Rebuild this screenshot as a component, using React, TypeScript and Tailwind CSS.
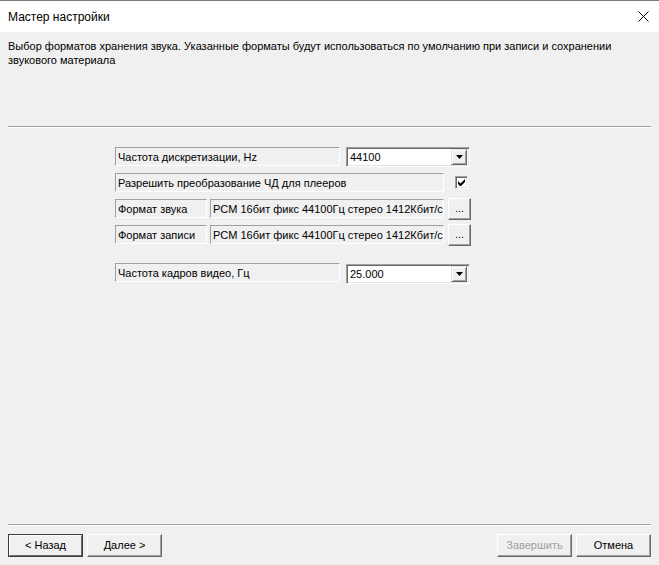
import React from "react";

const font = { fontFamily: '"Liberation Sans", Arial, sans-serif' };

function StaticBox({ w, children }: { w: string; children?: React.ReactNode }) {
  return (
    <div
      className={`${w} h-[19px] border border-t-[#a0a0a0] border-l-[#a0a0a0] border-b-white border-r-white flex items-center pl-[2px] pt-[1px] text-[11px] text-black whitespace-nowrap overflow-hidden`}
    >
      {children}
    </div>
  );
}

function Arrow() {
  return (
    <div className="w-[16px] h-[16px] bg-[#f0f0f0] border border-t-[#e3e3e3] border-l-[#e3e3e3] border-b-[#696969] border-r-[#696969] shadow-[inset_1px_1px_0_#ffffff,inset_-1px_-1px_0_#a0a0a0] flex items-center justify-center">
      <svg width="7" height="4" viewBox="0 0 7 4">
        <path d="M0 0h7L3.5 4z" fill="#000" />
      </svg>
    </div>
  );
}

function Combo({ value }: { value: string }) {
  return (
    <div className="w-[124px] h-[20px] bg-white border border-t-[#a0a0a0] border-l-[#a0a0a0] border-b-white border-r-white shadow-[inset_1px_1px_0_#696969,inset_-1px_-1px_0_#e3e3e3] flex items-center justify-between pl-[3px] pr-[2px] text-[11px] text-black">
      <span>{value}</span>
      <Arrow />
    </div>
  );
}

function Checkbox() {
  return (
    <div className="w-[13px] h-[13px] bg-white border border-t-[#a0a0a0] border-l-[#a0a0a0] border-b-white border-r-white shadow-[inset_1px_1px_0_#696969,inset_-1px_-1px_0_#e3e3e3] flex items-center justify-center">
      <svg width="7" height="7" viewBox="0 0 7 7">
        <path d="M0 2v3l2 2h1l4-4V0L2.5 4.5z" fill="#000" />
      </svg>
    </div>
  );
}

function DotsButton() {
  return (
    <div className="w-[23px] h-[22px] bg-[#f0f0f0] border border-t-white border-l-white border-b-[#696969] border-r-[#696969] shadow-[inset_-1px_-1px_0_#a0a0a0] flex items-center justify-center text-[11px] text-black leading-none pb-[1px]">
      ...
    </div>
  );
}

function Button({ label, isDefault, disabled }: { label: string; isDefault?: boolean; disabled?: boolean }) {
  if (isDefault) {
    return (
      <div className="w-[75px] h-[23px] border border-[#3c3c3c] flex">
        <div className="flex-1 border border-t-white border-l-white border-b-[#696969] border-r-[#696969] bg-[#f0f0f0] flex items-center justify-center text-[11px] text-black">
          {label}
        </div>
      </div>
    );
  }
  return (
    <div
      className={`w-[75px] h-[23px] bg-[#f0f0f0] border border-t-white border-l-white border-b-[#696969] border-r-[#696969] shadow-[inset_-1px_-1px_0_#a0a0a0] flex items-center justify-center text-[11px] ${
        disabled ? "text-[#a0a0a0]" : "text-black"
      }`}
    >
      {label}
    </div>
  );
}

export default function App() {
  return (
    <div style={font} className="w-[659px] h-[565px] bg-[#f0f0f0] flex flex-col border-t border-[#7a7a7a] overflow-hidden">
      <div className="h-[31px] bg-white flex items-center justify-between pl-[8px] pr-[10px] shrink-0">
        <span className="text-[12px] text-black">Мастер настройки</span>
        <svg width="11" height="11" viewBox="0 0 11 11">
          <path d="M0.5 0.5L10.5 10.5M10.5 0.5L0.5 10.5" stroke="#000" strokeWidth="1" />
        </svg>
      </div>

      <div className="pt-[7px] pl-[8px] pr-[8px] text-[11px] leading-[14px] text-black">
        Выбор форматов хранения звука. Указанные форматы будут использоваться по умолчанию при записи и сохранении
        <br />
        звукового материала
      </div>

      <div className="mt-[59px] mx-[8px] h-[2px] border-t border-[#a0a0a0] border-b border-b-white shrink-0" />

      <div className="mt-[19px] pl-[115px] flex flex-col">
        <div className="flex items-start h-[19px]">
          <StaticBox w="w-[225px]">Частота дискретизации, Hz</StaticBox>
          <div className="ml-[6px]">
            <Combo value="44100" />
          </div>
        </div>
        <div className="flex items-center h-[19px] mt-[7px]">
          <StaticBox w="w-[329px]">Разрешить преобразование ЧД для плееров</StaticBox>
          <div className="ml-[11px]">
            <Checkbox />
          </div>
        </div>
        <div className="flex items-center h-[19px] mt-[7px]">
          <StaticBox w="w-[92px]">Формат звука</StaticBox>
          <div className="ml-[3px]">
            <StaticBox w="w-[234px]">PCM 16бит фикс 44100Гц стерео 1412Кбит/с</StaticBox>
          </div>
          <div className="ml-[4px]">
            <DotsButton />
          </div>
        </div>
        <div className="flex items-center h-[19px] mt-[7px]">
          <StaticBox w="w-[92px]">Формат записи</StaticBox>
          <div className="ml-[3px]">
            <StaticBox w="w-[234px]">PCM 16бит фикс 44100Гц стерео 1412Кбит/с</StaticBox>
          </div>
          <div className="ml-[4px]">
            <DotsButton />
          </div>
        </div>
        <div className="flex items-start h-[19px] mt-[19px]">
          <StaticBox w="w-[225px]">Частота кадров видео, Гц</StaticBox>
          <div className="ml-[6px] mt-[1px]">
            <Combo value="25.000" />
          </div>
        </div>
      </div>

      <div className="flex-1" />

      <div className="mx-[8px] h-[2px] border-t border-[#a0a0a0] border-b border-b-white shrink-0" />

      <div className="mt-[8px] mb-[8px] px-[8px] flex items-center shrink-0">
        <Button label="< Назад" isDefault />
        <div className="ml-[4px]">
          <Button label="Далее >" />
        </div>
        <div className="flex-1" />
        <Button label="Завершить" disabled />
        <div className="ml-[4px]">
          <Button label="Отмена" />
        </div>
      </div>
    </div>
  );
}
